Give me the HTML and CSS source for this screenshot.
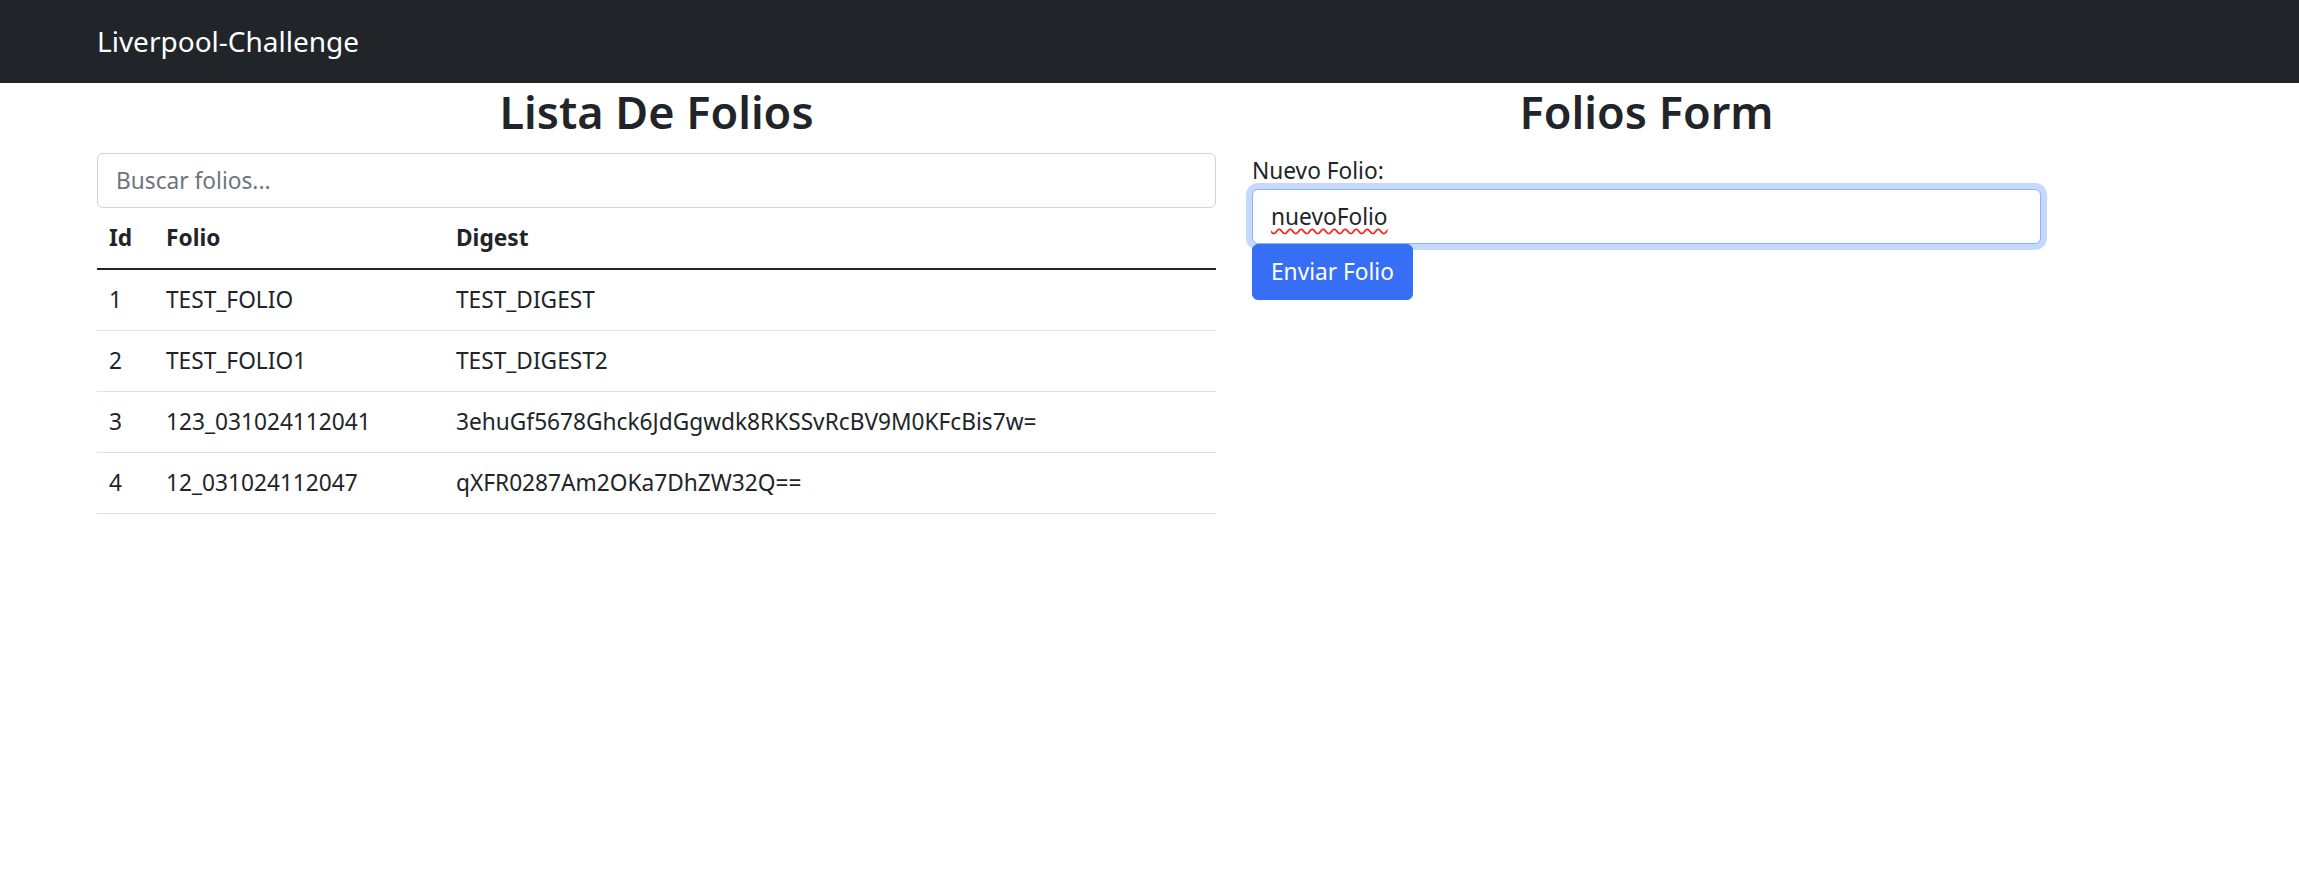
FILE: index.html
```html
<!DOCTYPE html>
<html lang="es">
<head>
<meta charset="utf-8">
<title>Liverpool-Challenge</title>
<link rel="stylesheet" href="styles.css">
</head>
<body>
<nav class="navbar">
  <div class="nav-inner">
    <a class="brand" href="#">Liverpool-Challenge</a>
  </div>
</nav>
<main class="container">
  <section class="col col-list">
    <h2 class="title">Lista De Folios</h2>
    <input class="form-control search" type="text" placeholder="Buscar folios...">
    <table class="table">
      <thead>
        <tr><th class="c-id">Id</th><th class="c-folio">Folio</th><th>Digest</th></tr>
      </thead>
      <tbody>
        <tr><td>1</td><td>TEST_FOLIO</td><td>TEST_DIGEST</td></tr>
        <tr><td>2</td><td>TEST_FOLIO1</td><td>TEST_DIGEST2</td></tr>
        <tr><td>3</td><td>123_031024112041</td><td>3ehuGf5678Ghck6JdGgwdk8RKSSvRcBV9M0KFcBis7w=</td></tr>
        <tr><td>4</td><td>12_031024112047</td><td>qXFR0287Am2OKa7DhZW32Q==</td></tr>
      </tbody>
    </table>
  </section>
  <section class="col col-form">
    <h2 class="title">Folios Form</h2>
    <form class="folio-form">
      <label class="label" for="nuevo">Nuevo Folio:</label>
      <div class="field">
        <input class="form-control focused" id="nuevo" type="text" value="nuevoFolio">
        <span class="spell" aria-hidden="true">nuevoFolio</span>
      </div>
      <button class="btn" type="button">Enviar Folio</button>
    </form>
  </section>
</main>
</body>
</html>
```
FILE: styles.css
```css
* { box-sizing: border-box; }
html, body { margin: 0; padding: 0; }
body {
  font-family: "Segoe UI", "Noto Sans", "Open Sans", sans-serif;
  font-size: 22.7px;
  line-height: 36px;
  color: #212529;
  background: #fff;
}
.navbar {
  background: #212529;
  height: 83px;
  display: flex;
  align-items: center;
}
.nav-inner {
  width: 1980px;
  margin-left: 79px;
  padding: 0 18px;
}
.brand {
  color: #fff;
  text-decoration: none;
  font-size: 28px;
  line-height: 45px;
}
.container {
  display: flex;
  width: 1980px;
  margin-left: 79px;
}
.col { padding: 0 18px; }
.col-list { flex: 0 0 1155px; }
.col-form { flex: 0 0 825px; }
.title {
  margin: 0 0 12px;
  font-size: 45px;
  line-height: 57.6px;
  font-weight: 600;
  text-align: center;
}
.form-control {
  display: block;
  width: 100%;
  height: 55px;
  padding: 0 18px;
  font-family: inherit;
  font-size: 22.7px;
  color: #212529;
  background: #fff;
  border: 1px solid #ced4da;
  border-radius: 6px;
  outline: none;
}
.form-control::placeholder { color: #6c757d; }
.field { position: relative; }
.focused {
  border-color: #86b7fe;
  box-shadow: 0 0 0 6px #c6d9fd;
}
.spell {
  position: absolute;
  left: 19px;
  top: 9px;
  line-height: 36px;
  color: transparent;
  pointer-events: none;
  text-decoration: underline wavy #e8372c;
  text-decoration-thickness: 1.5px;
  text-underline-offset: 4px;
  text-decoration-skip-ink: none;
}
.table {
  width: 100%;
  border-collapse: collapse;
}
.table th, .table td {
  text-align: left;
  padding: 12px;
  line-height: 36px;
  border-bottom: 1px solid #dee2e6;
  vertical-align: top;
}
.table th {
  font-weight: 700;
  border-bottom: 2px solid #212529;
}
.c-id { width: 57px; }
.c-folio { width: 290px; }
.label { display: block; line-height: 36px; }
.btn {
  display: inline-block;
  height: 56px;
  padding: 0 18px;
  font-family: inherit;
  font-size: 22.7px;
  color: #fff;
  background: #366ff5;
  border: 1px solid #366ff5;
  border-radius: 6px;
  position: relative;
}
```
